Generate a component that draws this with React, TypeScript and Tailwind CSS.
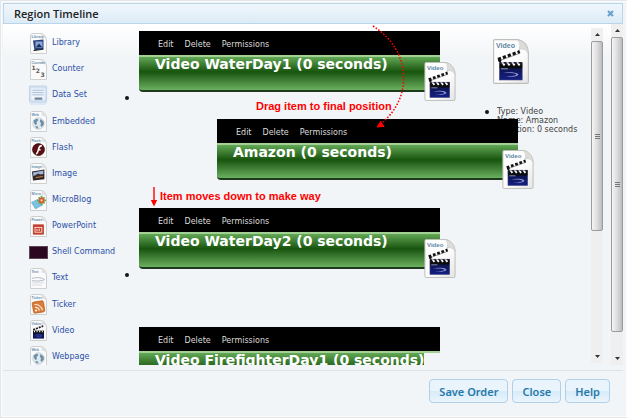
import React from "react";

type PageArt = { label: string; art?: React.ReactNode };

function PageIcon({ label, art }: PageArt) {
  return (
    <svg viewBox="0 0 17 21" className="h-[21px] w-[17px]" aria-hidden="true">
      <path d="M1.5.5H11.5C14.5 1 16 3.5 16.5 7V20.5H.5V1.5Z" fill="#fafafa" stroke="#c9cbcb" strokeWidth=".9" />
      <path d="M11 .8C12 2.5 12 4 11.6 5C13.5 4.4 15.3 5.2 16.3 7C16 3.2 14 1 11 .8Z" fill="#dfe0df" />
      <text x="1.4" y="4.6" fontSize="3.6" fontWeight="700" fill="#6d8fae" fontFamily="Liberation Sans, sans-serif">
        {label}
      </text>
      {art}
    </svg>
  );
}

const globe = (
  <g>
    <circle cx="8.5" cy="12.5" r="5.8" fill="#dfe8ee" stroke="#b4c2cc" strokeWidth=".6" />
    <path d="M3.5 9.5L7 7.5L8.5 9L6.5 11L7 13L5.5 14L4 12Z" fill="#6d8ea6" />
    <path d="M10.5 8L13.5 10.5L14 13L11.8 16L10.4 14.5L11 12.3L9.8 10.6Z" fill="#6d8ea6" />
    <path d="M5 15.2L7.6 15L8.6 17.6L6.6 17.5Z" fill="#7d9bb0" />
  </g>
);

const clapper = (
  <g>
    <path d="M3.2 9.8L13.2 6" stroke="#161616" strokeWidth="1.7" strokeDasharray="2 1" />
    <rect x="3" y="11" width="11" height="7.6" fill="#0e1764" />
    <rect x="3" y="10.6" width="11" height="2.8" fill="#111" />
    <path d="M4 11.5H14" stroke="#fff" strokeWidth="1.3" strokeDasharray="1 1.6" />
    <path d="M5.5 15.4C9 14 12 15 11.5 16.2C11 17 8 17 6.5 16.6" stroke="#4c5ba0" strokeWidth=".7" fill="none" />
  </g>
);

function DataSetIcon() {
  return (
    <svg viewBox="0 0 21 21" className="h-[21px] w-[21px]" aria-hidden="true">
      <rect x="1.5" y=".5" width="18" height="17" rx="1" fill="#d3e1f1" stroke="#c1d3e8" />
      <rect x="3.5" y="3" width="14" height="12" fill="#edf4fb" />
      <path d="M4.5 5H16.5M4.5 7.4H16.5M4.5 9.8H16.5" stroke="#a2b7d2" strokeWidth=".9" />
      <rect x="7" y="12.6" width="8" height="2.4" fill="#75869c" />
      <path d="M1 18.5H20L18 20.5H3Z" fill="#dde9f6" />
    </svg>
  );
}

function ShellIcon() {
  return (
    <svg viewBox="0 0 19 13" className="h-[13px] w-[19px]" aria-hidden="true">
      <rect x=".5" y=".5" width="18" height="12" fill="#2b0620" stroke="#5c4458" />
    </svg>
  );
}

const modules: { name: string; icon: React.ReactNode }[] = [
  {
    name: "Library",
    icon: (
      <PageIcon
        label="Library"
        art={
          <g>
            <path d="M3 7.5L13.5 6.5V16L4.5 17.5Z" fill="#27407f" />
            <rect x="5.5" y="8.5" width="7" height="6" fill="#8fa7d6" />
            <path d="M6 14L9 10.5L12 14Z" fill="#1b2f66" />
            <path d="M3.5 17.6L13.5 16.2" stroke="#222" />
          </g>
        }
      />
    ),
  },
  {
    name: "Counter",
    icon: (
      <PageIcon
        label="Counter"
        art={
          <g fontFamily="DejaVu Sans, sans-serif" fontWeight="700" fontSize="6" fill="#555">
            <text x="1.6" y="11">1</text>
            <text x="5.8" y="14.4">2</text>
            <text x="10.6" y="18">3</text>
          </g>
        }
      />
    ),
  },
  { name: "Data Set", icon: <DataSetIcon /> },
  { name: "Embedded", icon: <PageIcon label="Web" art={globe} /> },
  {
    name: "Flash",
    icon: (
      <PageIcon
        label="Flash"
        art={
          <g>
            <circle cx="8.5" cy="12.6" r="6" fill="#5c0d12" stroke="#351012" strokeWidth=".7" />
            <path d="M6.2 17C8.4 15.8 8.2 12.5 9 10.6C9.6 9.2 10.4 8.6 11.8 8.6M8 12.8H10.6" stroke="#fff" strokeWidth="1.6" fill="none" />
          </g>
        }
      />
    ),
  },
  {
    name: "Image",
    icon: (
      <PageIcon
        label="Image"
        art={
          <g>
            <path d="M2 8.6L14.4 6.4V16.2L3 17.6Z" fill="#28232b" />
            <path d="M3 9.4L13.4 7.6V11L3.4 13Z" fill="#a4b6d8" />
            <path d="M3.4 13.6L8 10.5L13.4 12.8V14.8L3.6 16.4Z" fill="#3a2c28" />
            <path d="M6 14.6L12.8 13.4" stroke="#d68b45" strokeWidth=".9" />
          </g>
        }
      />
    ),
  },
  {
    name: "MicroBlog",
    icon: (
      <PageIcon
        label="Micro"
        art={
          <g>
            <path d="M1.5 12.5L7.5 9.5L12.5 15L5.5 18.8Z" fill="#7cc3e2" stroke="#4d9cc6" strokeWidth=".6" />
            <path d="M11.6 5.8V15M7 10.4H16M8.6 7.4L14.6 13.4M14.6 7.4L8.6 13.4" stroke="#63ab44" strokeWidth="1.8" />
            <circle cx="11.6" cy="10.4" r="2.8" fill="#e1553c" />
            <circle cx="11.6" cy="10.4" r="1.1" fill="#f4d9a0" />
          </g>
        }
      />
    ),
  },
  {
    name: "PowerPoint",
    icon: (
      <PageIcon
        label="Power"
        art={
          <g>
            <rect x="3.2" y="8.8" width="10.4" height="9.4" fill="#c8402e" stroke="#a93323" strokeWidth=".6" />
            <rect x="5" y="11.4" width="6.8" height="4.8" fill="none" stroke="#f7dcd5" strokeWidth=".9" />
            <path d="M7 13V15M9.2 12.6V15" stroke="#f7dcd5" strokeWidth="1" />
          </g>
        }
      />
    ),
  },
  { name: "Shell Command", icon: <ShellIcon /> },
  {
    name: "Text",
    icon: (
      <PageIcon
        label="Text"
        art={
          <g fill="none" stroke="#a9b7c6" strokeWidth=".9">
            <path d="M2 10.4C6 9 12 9.4 14.6 11.6C12 13.4 6 13.2 2 12.6" />
            <path d="M2 14.8H14M2 17H12" stroke="#d6dbe0" />
          </g>
        }
      />
    ),
  },
  {
    name: "Ticker",
    icon: (
      <PageIcon
        label="Ticker"
        art={
          <g transform="rotate(-9 8.5 13)">
            <rect x="2.8" y="7.4" width="11.4" height="11.2" rx="1.6" fill="#d97b36" stroke="#b65f22" strokeWidth=".7" />
            <circle cx="5.6" cy="16" r="1" fill="#fff" />
            <path d="M5 12.8A4 4 0 0 1 8.8 16.8M5 10A7 7 0 0 1 11.8 16.8" fill="none" stroke="#fbe6d4" strokeWidth="1.2" />
          </g>
        }
      />
    ),
  },
  { name: "Video", icon: <PageIcon label="Video" art={clapper} /> },
  { name: "Webpage", icon: <PageIcon label="Web" art={globe} /> },
];

function VideoFile({ className }: { className: string }) {
  return (
    <svg viewBox="0 0 36 45" className={className} aria-hidden="true">
      <defs>
        <linearGradient id="paper" x1="0" y1="0" x2="1" y2="1">
          <stop offset="0" stopColor="#fff" />
          <stop offset=".6" stopColor="#fbfbfb" />
          <stop offset="1" stopColor="#e4e4e4" />
        </linearGradient>
        <linearGradient id="slate" x1="0" y1="0" x2="0" y2="1">
          <stop offset="0" stopColor="#0b1037" />
          <stop offset="1" stopColor="#141f86" />
        </linearGradient>
      </defs>
      <path d="M2 .6H25C31 2 35 7 35.4 14V43Q35.4 44.4 34 44.4H2Q.6 44.4 .6 43V2Q.6 .6 2 .6Z" fill="url(#paper)" stroke="#bdbeb9" strokeWidth="1.1" />
      <path d="M24.5 .8C27 3 27.4 7 26 10.6C29.5 9 33.6 10.6 35.2 14.4C35 7 31 1.6 24.5 .8Z" fill="#dcddd9" stroke="#c4c5c1" strokeWidth=".6" />
      <text x="3" y="9" fontSize="7" fontWeight="700" fill="#5c86a5" fontFamily="Liberation Sans, sans-serif">
        Video
      </text>
      <path d="M5 20.4L26.8 12.6" stroke="#111" strokeWidth="3.2" strokeDasharray="3.2 2" />
      <path d="M5.6 22L27 14.2" stroke="#555" strokeWidth=".6" />
      <circle cx="6.8" cy="21.6" r="1.6" fill="#111" />
      <rect x="6.4" y="24" width="22.8" height="17" fill="url(#slate)" />
      <rect x="6.4" y="23" width="22.8" height="6.4" fill="#0c0c0c" />
      <path d="M9 23L11.6 26.4M14 23L16.6 26.4M19 23L21.6 26.4M24 23L26.6 26.4" stroke="#fff" strokeWidth="2" />
      <path d="M8 29.8H15" stroke="#a6acd0" strokeWidth=".9" />
      <path d="M10 34C17 32.2 25.6 33.4 25.4 35.6C25 38 17 38.2 12.4 37.6C17 37.2 23.4 36.8 23.2 35.4C22.8 34.2 16 33.8 10 34Z" fill="#8d97cf" />
      <rect x="6.4" y="24" width="22.8" height="17" fill="none" stroke="#4a4f74" strokeWidth=".6" />
    </svg>
  );
}

function TimelineItem({ title, clipped }: { title: string; clipped?: boolean }) {
  return (
    <div className="relative w-[301px] shrink-0">
      <div className="flex h-6 items-center gap-[11px] bg-black pt-[3px] pl-[19px] text-[8px] leading-none text-[#dcdcdc]">
        <a href="#edit">Edit</a>
        <a href="#delete">Delete</a>
        <a href="#permissions">Permissions</a>
      </div>
      <div className="h-[2px] bg-[#a3d095]" />
      {clipped ? (
        <div className="h-9 w-fit bg-linear-to-b from-[#62a855] via-[#17550d] via-45% to-[#6bb05f] pl-4">
          <h3 className="text-[14px] leading-[14px] font-bold whitespace-nowrap text-white">{title}</h3>
        </div>
      ) : (
        <div className="h-[35px] rounded-b-sm border-b-2 border-[#1d3b1c] bg-linear-to-b from-[#62a855] via-[#17550d] via-45% to-[#6bb05f] pl-4">
          <h3 className="text-[14px] leading-[14px] font-bold whitespace-nowrap text-white">{title}</h3>
        </div>
      )}
      {!clipped && <VideoFile className="absolute top-[31px] -right-4 h-[39px] w-[32px]" />}
    </div>
  );
}

function Grip() {
  return (
    <div className="flex w-[5px] flex-col gap-px">
      <span className="h-px bg-[#777]" />
      <span className="h-px bg-[#777]" />
      <span className="h-px bg-[#777]" />
    </div>
  );
}

function ScrollBar({ thumb }: { thumb: string }) {
  return (
    <div className="flex h-full w-3 shrink-0 flex-col bg-[#efefef]" aria-hidden="true">
      <div className="flex h-[13px] shrink-0 items-center justify-center">
        <svg viewBox="0 0 5 3" className="h-[3px] w-[5px]"><path d="M0 3L2.5 0L5 3Z" fill="#333" /></svg>
      </div>
      <div className="flex min-h-0 flex-1 flex-col">
        <div className={`flex items-center justify-center rounded-[2px] border border-[#9c9c9c] bg-linear-to-r from-[#f5f5f5] via-[#dededf] to-[#bcbcc0] ${thumb}`}>
          <Grip />
        </div>
      </div>
      <div className="flex h-[13px] shrink-0 items-center justify-center">
        <svg viewBox="0 0 5 3" className="h-[3px] w-[5px]"><path d="M0 0L2.5 3L5 0Z" fill="#333" /></svg>
      </div>
    </div>
  );
}

function DialogButton({ children }: { children: React.ReactNode }) {
  return (
    <button
      type="button"
      className="h-6 rounded-[4px] border border-[#aed0ea] bg-linear-to-b from-[#e9f4fc] from-50% via-[#d7ebf9] via-50% to-[#eaf5fd] px-[9px] font-['Noto_Sans','Open_Sans',sans-serif] text-[11px] leading-none font-semibold text-[#2779aa]"
    >
      {children}
    </button>
  );
}

export default function App() {
  return (
    <div className="flex h-screen flex-col bg-[#e4e7ea] pb-px pt-px pl-px font-['DejaVu_Sans',Verdana,sans-serif]">
      <div className="flex min-h-0 flex-1 flex-col border border-[#f9fbfc] bg-[#f2f5f7] pt-px pr-[3px] pl-px">
        <header className="flex h-[21px] shrink-0 items-center justify-between border border-[#b9d5ea] bg-linear-to-b from-[#f0f7fc] to-[#dcebf6] pr-2 pl-[10px]">
          <h1 className="font-['Open_Sans','Noto_Sans',sans-serif] text-[11px] leading-none font-semibold text-[#222]">Region Timeline</h1>
          <button type="button" aria-label="Close dialog" className="flex h-[7px] w-[7px] items-center">
            <svg viewBox="0 0 7 7" className="h-[7px] w-[7px]"><path d="M1 1L6 6M6 1L1 6" stroke="#6ba3cd" strokeWidth="2.2" /></svg>
          </button>
        </header>

        <div className="relative flex min-h-0 flex-1 overflow-hidden bg-linear-to-b from-white to-[#f2f5f7] to-10%">
          <nav className="w-[122px] shrink-0 pt-[6px] pl-[25px]">
            <ul className="flex h-[340px] flex-col">
              {modules.map((m) => (
                <li key={m.name} className="min-h-0 flex-1">
                  <a href={`#${m.name}`} className="flex h-full items-center gap-1 text-[8px] whitespace-nowrap text-[#2a4fa8]">
                    <span className="flex w-5 justify-center">{m.icon}</span>
                    {m.name}
                  </a>
                </li>
              ))}
            </ul>
          </nav>

          <ul className="z-10 flex w-[315px] shrink-0 flex-col pt-[7px]">
            <li className="flex h-[88px] shrink-0 gap-[10px]">
              <span className="mt-[65px] size-1 shrink-0 rounded-full bg-[#151515]" />
              <TimelineItem title="Video WaterDay1 (0 seconds)" />
            </li>
            <li className="flex h-[89px] shrink-0 pl-[92px]">
              <TimelineItem title="Amazon (0 seconds)" />
            </li>
            <li className="flex h-[119px] shrink-0 gap-[10px]">
              <span className="mt-[65px] size-1 shrink-0 rounded-full bg-[#151515]" />
              <TimelineItem title="Video WaterDay2 (0 seconds)" />
            </li>
            <li className="flex shrink-0 pl-[14px]">
              <TimelineItem title="Video FirefighterDay1 (0 seconds)" clipped />
            </li>
          </ul>

          <aside className="min-w-0 flex-1 pt-[15px] pl-[45px]">
            <VideoFile className="ml-2 h-[45px] w-9" />
            <ul className="mt-[23px] text-[8px] leading-[9px] whitespace-nowrap text-[#444]">
              {["Type: Video", "Name: Amazon", "Duration: 0 seconds"].map((t) => (
                <li key={t} className="flex items-center gap-2">
                  <span className="size-1 rounded-full bg-[#151515]" />
                  {t}
                </li>
              ))}
            </ul>
          </aside>

          <div className="flex shrink-0 gap-2">
            <div className="h-full pt-1 pb-[2px]"><ScrollBar thumb="h-[190px]" /></div>
            <ScrollBar thumb="h-[295px]" />
          </div>

          <p className="absolute top-[76px] left-[253px] z-20 font-['Liberation_Sans',Arial,sans-serif] text-[11px] leading-[13px] font-bold whitespace-nowrap text-[#ff0000]">
            Drag item to final position
          </p>
          <p className="absolute top-[166px] left-[157px] z-20 font-['Liberation_Sans',Arial,sans-serif] text-[11px] leading-[13px] font-bold whitespace-nowrap text-[#ff0000]">
            Item moves down to make way
          </p>
          <svg viewBox="0 0 36 106" className="absolute top-0 left-[368px] z-20 h-[106px] w-9" aria-hidden="true">
            <path d="M2 2C40 26 42 72 12 98" fill="none" stroke="#ff0000" strokeWidth="1.5" strokeDasharray="1.6 1.6" />
            <path d="M6 103L9.6 97.4L13 102.4Z" fill="#ff0000" stroke="#ff0000" />
          </svg>
          <svg viewBox="0 0 8 20" className="absolute top-[163px] left-[147px] z-20 h-5 w-2" aria-hidden="true">
            <path d="M4 0V17" stroke="#ff0000" strokeWidth="1.4" />
            <path d="M.8 13H7.2L4 19.5Z" fill="#ff0000" />
          </svg>
        </div>

        <footer className="mt-[5px] flex shrink-0 justify-end gap-1 border-t border-[#dfe1e3] pt-2 pr-[13px] pb-[13px]">
          <DialogButton>Save Order</DialogButton>
          <DialogButton>Close</DialogButton>
          <DialogButton>Help</DialogButton>
        </footer>
      </div>
    </div>
  );
}
